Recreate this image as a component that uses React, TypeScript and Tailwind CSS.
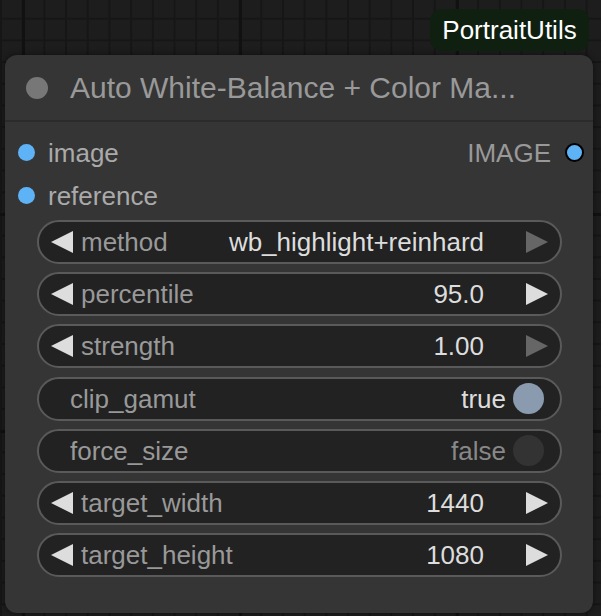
import React from "react";

interface Widget {
  kind: "number" | "combo" | "toggle";
  label: string;
  value: string;
  on?: boolean;
  leftOff?: boolean;
  rightOff?: boolean;
}

const widgets: Widget[] = [
  { kind: "combo", label: "method", value: "wb_highlight+reinhard", rightOff: true },
  { kind: "number", label: "percentile", value: "95.0" },
  { kind: "number", label: "strength", value: "1.00", rightOff: true },
  { kind: "toggle", label: "clip_gamut", value: "true", on: true },
  { kind: "toggle", label: "force_size", value: "false", on: false },
  { kind: "number", label: "target_width", value: "1440" },
  { kind: "number", label: "target_height", value: "1080" },
];

function Arrow({ dir, dim }: { dir: "left" | "right"; dim?: boolean }) {
  return (
    <svg width="22" height="22" viewBox="0 0 22 22" className="shrink-0">
      <polygon
        points={dir === "left" ? "0,11 22,0 22,22" : "22,11 0,0 0,22"}
        fill={dim ? "#666666" : "#dddddd"}
      />
    </svg>
  );
}

function WidgetRow({ w }: { w: Widget }) {
  if (w.kind === "toggle") {
    return (
      <div className="h-[44px] rounded-full border-2 border-[#5a5a5a] bg-[#222222] flex items-center pl-[31px] pr-[16px]">
        <span className="text-[#999999]">{w.label}</span>
        <span className={"ml-auto mr-[7px] " + (w.on ? "text-[#dddddd]" : "text-[#888888]")}>{w.value}</span>
        <div className={"w-[31px] h-[31px] rounded-full " + (w.on ? "bg-[#8a9bb0]" : "bg-[#333333]")}></div>
      </div>
    );
  }
  return (
    <div className="h-[44px] rounded-full border-2 border-[#5a5a5a] bg-[#222222] flex items-center pl-[12px] pr-[12px]">
      <Arrow dir="left" dim={w.leftOff} />
      <span className="ml-[8px] text-[#999999]">{w.label}</span>
      <span className="ml-auto text-[#dddddd]">{w.value}</span>
      <div className="ml-[42px]">
        <Arrow dir="right" dim={w.rightOff} />
      </div>
    </div>
  );
}

function App() {
  return (
    <div
      className="relative w-[601px] h-[616px] overflow-hidden bg-[#1d1d1d] pt-[55px] pl-[5px] font-['Liberation_Sans',Arial,sans-serif] bg-[linear-gradient(to_right,#111111_3px,transparent_3px),linear-gradient(to_bottom,#111111_3px,transparent_3px),linear-gradient(to_right,#161616_2px,transparent_2px),linear-gradient(to_bottom,#161616_2px,transparent_2px)] bg-[size:217px_217px,217px_217px,21.7px_21.7px,21.7px_21.7px] bg-[position:22px_0px,0px_-4px,0px_-4px,0px_-4px]"
    >
      {/* category badge */}
      <div className="absolute top-[9px] left-[430px] w-[159px] h-[42px] rounded-[12px] bg-[#0f1f10] flex items-center justify-center text-white text-[26px] leading-none">
        PortraitUtils
      </div>

      {/* node */}
      <div className="w-[588px] h-[558px] rounded-[12px] bg-[#353535] text-[26px] leading-none shadow-[0_0_6px_rgba(0,0,0,0.5)]">
        <div className="h-[67px] flex items-center pl-[21px] border-b-2 border-[#2b2b2b]">
          <div className="w-[22px] h-[22px] rounded-full bg-[#777777]"></div>
          <span className="ml-[22px] text-[30px] text-[#999999]">Auto White-Balance + Color Ma...</span>
        </div>

        <div className="pt-[9px]">
          <div className="h-[43px] flex items-center pl-[13px] pr-[9px]">
            <div className="w-[17px] h-[17px] rounded-full bg-[#5eb3f6]"></div>
            <span className="ml-[13px] text-[#aaaaaa]">image</span>
            <span className="ml-auto text-[#999999]">IMAGE</span>
            <div className="ml-[14px] w-[19px] h-[19px] rounded-full bg-[#5eb3f6] border-2 border-black"></div>
          </div>
          <div className="h-[43px] flex items-center pl-[13px]">
            <div className="w-[17px] h-[17px] rounded-full bg-[#5eb3f6]"></div>
            <span className="ml-[13px] text-[#aaaaaa]">reference</span>
          </div>
        </div>

        <div className="mt-[3px] ml-[32px] w-[525px] flex flex-col gap-[8.2px]">
          {widgets.map((w, i) => (
            <WidgetRow key={i} w={w} />
          ))}
        </div>
      </div>
    </div>
  );
}

export default App;
